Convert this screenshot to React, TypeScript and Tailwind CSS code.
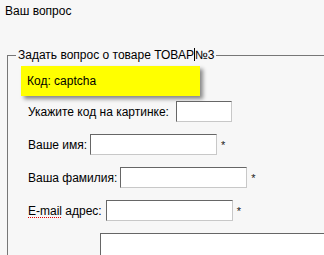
export default function App() {
  const inputCls =
    'h-[21px] bg-white border border-t-[#666] border-l-[#666] border-r-[#c8c8c8] border-b-[#c8c8c8] outline-none'

  return (
    <div className="w-[324px] h-[255px] overflow-hidden bg-[#f7f7f7] font-['Liberation_Sans',Arial,sans-serif] text-[12px] leading-[14px] text-black">
      <div className="pl-[5px] pt-[4px]">Ваш вопрос</div>

      <fieldset className="mt-[30px] ml-[7px] w-[420px] border border-[#777] pl-[13px] pt-[4px] pb-[20px]">
        <legend className="-ml-[5px] px-[2px]">
          Задать вопрос о товаре ТОВАР
          <span className="inline-block w-px h-[13px] bg-black align-[-2px]" />
          №3
        </legend>

        {/* captcha hint */}
        <div className="w-[179px] h-[30px] bg-[#ffff00] pl-[6px] flex items-center shadow-[3px_3px_4px_rgba(0,0,0,0.45)]">
          Код: captcha
        </div>

        <div className="pl-[7px] pt-[5px] flex flex-col gap-[12px]">
          <div className="flex items-center gap-[4px]">
            <span>Укажите код на картинке:</span>
            <input className={`${inputCls} ml-[3px] w-[56px]`} />
          </div>

          <div className="flex items-center gap-[3px]">
            <span>Ваше имя:</span>
            <input className={`${inputCls} w-[127px]`} />
            <span className="ml-[1px] text-[11px] text-[#222]">*</span>
          </div>

          <div className="flex items-center gap-[3px]">
            <span>Ваша фамилия:</span>
            <input className={`${inputCls} w-[127px]`} />
            <span className="ml-[1px] text-[11px] text-[#222]">*</span>
          </div>

          <div className="flex items-center gap-[4px]">
            <span>
              <span className="underline decoration-dotted decoration-[#e00000] underline-offset-[2px]">E-mail</span> адрес:
            </span>
            <input className={`${inputCls} w-[127px]`} />
            <span className="text-[11px] text-[#222]">*</span>
          </div>

          <div className="pl-[72px]">
            <textarea className="block w-[260px] h-[60px] bg-white border border-t-[#666] border-l-[#666] border-r-[#c8c8c8] border-b-[#c8c8c8] outline-none resize-none" />
          </div>
        </div>
      </fieldset>
    </div>
  )
}
